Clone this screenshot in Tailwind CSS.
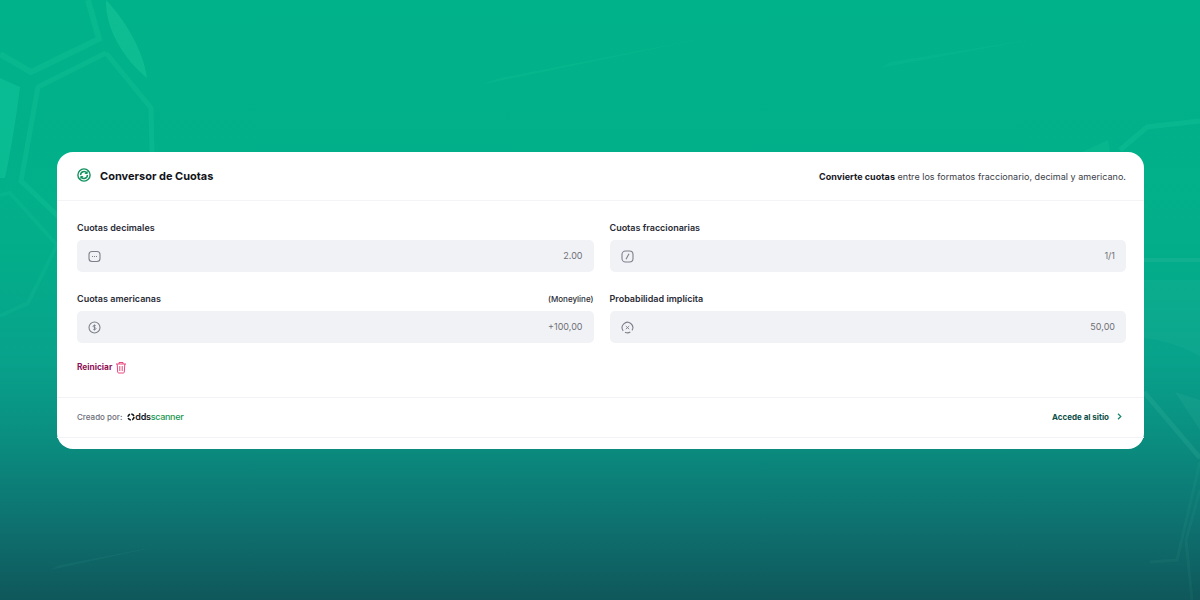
<!DOCTYPE html>
<html lang="es">

<head>
    <meta charset="UTF-8">
    <meta name="viewport" content="width=device-width, initial-scale=1.0">
    <title>Conversor de Cuotas</title>
    <script src="https://cdn.jsdelivr.net/npm/@tailwindcss/browser@4"></script>
</head>

<body class="font-['Inter',sans-serif]">
    <div class="relative flex h-[600px] w-[1200px] items-start overflow-hidden bg-[linear-gradient(180deg,#00b289_0%,#02af8a_40%,#08a28b_60%,#0a8e80_73%,#0e7270_87%,#0f575a_100%)] pl-[57px] pt-[152px]">
        <!-- ball panels behind the card -->
        <svg class="absolute left-0 top-0" width="1200" height="600" viewBox="0 0 1200 600" fill="none">
            <path d="M88 0 L99 39 L31 72 L0 54" stroke="#1cc79b" stroke-opacity=".3" stroke-width="6" />
            <path d="M106 0 C125 20 143 50 147 78 C125 60 105 30 106 0Z" fill="#1cc79b" fill-opacity=".5" />
            <path d="M0 78 L20 87 C16 120 10 155 5 178 L0 178Z" fill="#14c79b" fill-opacity=".5" />
            <path d="M106 53 L38 87 L21 181 L60 218 M106 53 L151 108 L152 152" stroke="#1cc79b" stroke-opacity=".3" stroke-width="5" />
            <path d="M0 195 L10 193 L57 245 L28 303 L0 316" stroke="#1cc79b" stroke-opacity=".18" stroke-width="4" />
            <path d="M1200 121 L1147 127 L1120 150" stroke="#1cc79b" stroke-opacity=".3" stroke-width="5" />
            <path d="M1110 152 L1108 140 L1082 152Z" fill="#1cc79b" fill-opacity=".25" />
            <path d="M1144 260 H1200" stroke="#4fc4ac" stroke-opacity=".18" stroke-width="4" />
            <path d="M1144 280 H1200 V356 C1180 345 1160 340 1144 338Z" fill="#4fc4ac" fill-opacity=".09" />
            <path d="M1144 392 L1200 458" stroke="#4fc4ac" stroke-opacity=".16" stroke-width="5" />
            <path d="M1175 392 L1200 400 V430Z" fill="#4fc4ac" fill-opacity=".12" />
            <path d="M1200 462 L1177 560 L1150 562 M1200 490 L1186 540 L1192 600" stroke="#4fc4ac" stroke-opacity=".07" stroke-width="3" />
            <path d="M50 570 L165 545 L60 565Z" fill="#4fc4ac" fill-opacity=".08" />
            <path d="M480 85 L720 35 L500 78Z" fill="#1cc79b" fill-opacity=".2" />
            <path d="M880 68 L1040 38 L890 62Z" fill="#1cc79b" fill-opacity=".16" />
        </svg>

        <div class="relative flex h-[297px] w-[1087px] flex-col rounded-2xl bg-white">
            <div class="flex h-[49px] shrink-0 items-center justify-between border-b border-[#f4f4f6] pl-5 pr-[18px]">
                <div class="flex items-center gap-[9px]">
                    <svg class="mb-[2px]" width="14" height="14" viewBox="0 0 14 14" fill="none" stroke="#11915f">
                        <circle cx="7" cy="7" r="6.1" stroke-width="1.4" />
                        <path d="M3.6 7 A3.4 3.4 0 0 1 9.8 5 M10.4 7 A3.4 3.4 0 0 1 4.2 9" stroke-width="1.5" />
                        <path d="M10.3 3.2 L10 5.6 L7.8 5.2 M3.7 10.8 L4 8.4 L6.2 8.8" stroke-width="1.1" />
                    </svg>
                    <h1 class="mt-[1px] text-[11px] font-bold leading-none text-[#12131a]">Conversor de Cuotas</h1>
                </div>
                <p class="mt-[1px] text-[9px] leading-none tracking-[.03px] text-[#3b3d47]"><span class="font-bold text-[#16171f]">Convierte cuotas</span> entre los formatos fraccionario, decimal y americano.</p>
            </div>

            <div class="grid grid-cols-2 gap-x-4 gap-y-[21px] pl-5 pr-[18px] pt-[21px]">
                <div>
                    <div class="mb-[6px] flex h-3 items-center text-[9px] font-semibold text-[#2a2c35]">Cuotas decimales</div>
                    <div class="flex h-8 items-center justify-between rounded-[5px] bg-[#f1f2f6] px-[11px] text-[9px] text-[#6f7075]">
                        <svg width="13" height="13" viewBox="0 0 13 13" fill="none" stroke="#7d808b" stroke-width="1.1">
                            <rect x="1" y="1.5" width="11" height="10" rx="3" />
                            <path d="M4 6.5h1M6 6.5h1M8 6.5h1" />
                        </svg>
                        <span>2.00</span>
                    </div>
                </div>
                <div>
                    <div class="mb-[6px] flex h-3 items-center text-[9px] font-semibold text-[#2a2c35]">Cuotas fraccionarias</div>
                    <div class="flex h-8 items-center justify-between rounded-[5px] bg-[#f1f2f6] px-[11px] text-[9px] text-[#6f7075]">
                        <svg width="13" height="13" viewBox="0 0 13 13" fill="none" stroke="#7d808b" stroke-width="1.1">
                            <rect x="1" y="1" width="11" height="11" rx="3.5" />
                            <path d="M8 3.8 L5 9.2" />
                        </svg>
                        <span>1/1</span>
                    </div>
                </div>
                <div>
                    <div class="mb-[6px] flex h-3 items-center justify-between text-[9px] font-semibold text-[#2a2c35]">
                        <span>Cuotas americanas</span>
                        <span class="text-[8px] font-medium">(Moneyline)</span>
                    </div>
                    <div class="flex h-8 items-center justify-between rounded-[5px] bg-[#f1f2f6] px-[11px] text-[9px] text-[#6f7075]">
                        <svg width="13" height="13" viewBox="0 0 13 13" fill="none" stroke="#7d808b" stroke-width="1.1">
                            <circle cx="6.5" cy="6.5" r="5.5" />
                            <path d="M8 5 C7.6 4.2 5 4 5 5.3 C5 6.6 8 6.2 8 7.6 C8 8.9 5.4 8.8 5 8 M6.5 3.5V9.5" stroke-width=".9" />
                        </svg>
                        <span>+100,00</span>
                    </div>
                </div>
                <div>
                    <div class="mb-[6px] flex h-3 items-center text-[9px] font-semibold text-[#2a2c35]">Probabilidad implícita</div>
                    <div class="flex h-8 items-center justify-between rounded-[5px] bg-[#f1f2f6] px-[11px] text-[9px] text-[#6f7075]">
                        <svg width="13" height="13" viewBox="0 0 13 13" fill="none" stroke="#7d808b" stroke-width="1.1">
                            <path d="M2.2 9.8 A5.3 5.3 0 1 1 11 9.4 M9.3 11 A5.3 5.3 0 0 1 4 11.2" />
                            <path d="M4.8 5 L8.2 8.2 M8.2 5 L4.8 8.2" stroke-width=".9" />
                        </svg>
                        <span>50,00</span>
                    </div>
                </div>
            </div>

            <div class="mt-[18px] flex h-[13px] items-center gap-[3px] pl-5">
                <span class="text-[8.3px] font-bold text-[#8c1257]">Reiniciar</span>
                <svg width="12" height="13" viewBox="0 0 12 13" fill="none" stroke="#e8487f" stroke-width="1">
                    <path d="M1 3h10M4 3V1.5h4V3M2.2 3l.5 8.2a1 1 0 0 0 1 .8h4.6a1 1 0 0 0 1-.8L9.8 3M4.8 5v5M7.2 5v5" />
                </svg>
            </div>

            <div class="mt-[23px] flex h-[41px] items-center justify-between border-y border-[#f1f1f6] pb-[2px] pl-5 pr-[22px]">
                <div class="flex items-center gap-[5px]">
                    <span class="text-[8px] font-medium text-[#6b6d78]">Creado por:</span>
                    <!-- logo wordmark, set as text -->
                    <span class="flex items-center text-[9px] font-semibold leading-none tracking-[-.3px] text-[#10151a]">
                        <svg width="8" height="8" viewBox="0 0 8 8" fill="none" stroke="#10151a" stroke-width="1.6"><circle cx="4" cy="4" r="3" stroke-dasharray="3.4 1.3" /></svg>dds<span class="font-medium text-[#18964f]">scanner</span>
                    </span>
                </div>
                <div class="flex items-center gap-2">
                    <span class="text-[8px] font-bold text-[#0c4f47]">Accede al sitio</span>
                    <svg width="5" height="7" viewBox="0 0 5 7" fill="none" stroke="#17856a" stroke-width="1.2"><path d="M1 .8 L3.8 3.5 L1 6.2" /></svg>
                </div>
            </div>
        </div>
    </div>
</body>

</html>
